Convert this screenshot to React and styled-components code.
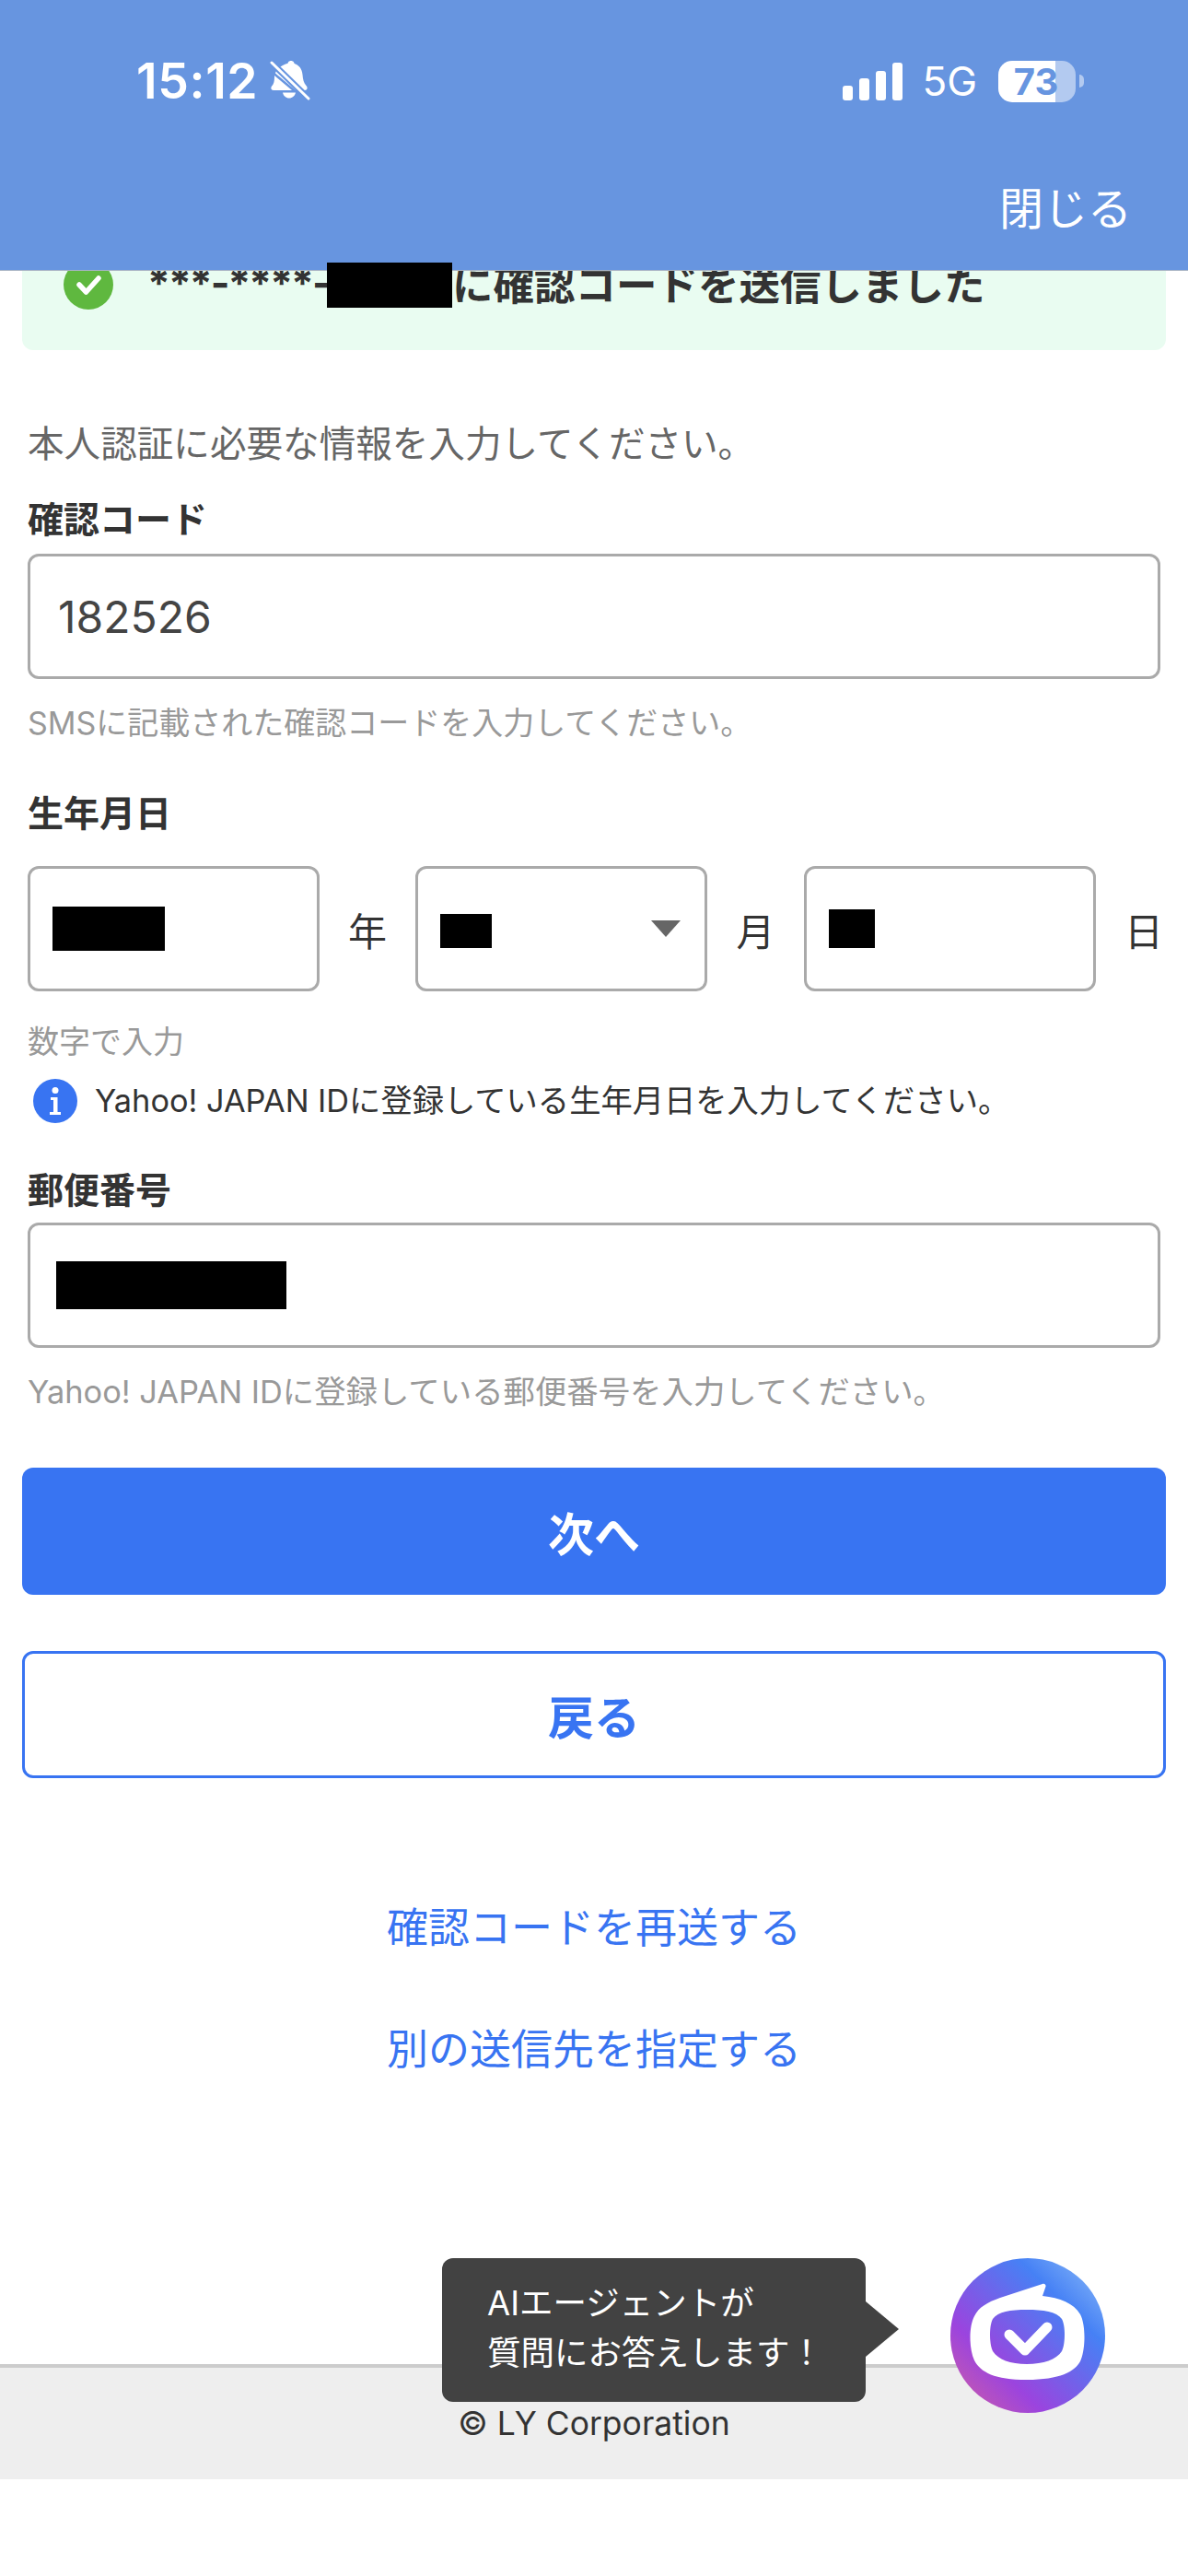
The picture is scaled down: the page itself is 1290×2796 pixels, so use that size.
import React from 'react'
import styled, { createGlobalStyle } from 'styled-components'

const GlobalStyle = createGlobalStyle`
  html, body {
    margin: 0;
    padding: 0;
    background: #fff;
  }
  body {
    font-family: "Inter", "Noto Sans CJK JP", sans-serif;
    color: #333;
  }
`

const Page = styled.div`
  position: relative;
  width: 1290px;
  height: 2796px;
  overflow: hidden;
`

const Header = styled.header`
  position: absolute;
  top: 0;
  left: 0;
  right: 0;
  height: 293px;
  z-index: 1;
  background: #6795e0;
  box-shadow: 0 1px 0 #a9b4c4;
  color: #fff;
  box-sizing: border-box;
  padding: 63px 61px 0 148px;
  display: flex;
  flex-direction: column;
`

const StatusBar = styled.div`
  display: flex;
  align-items: center;
  justify-content: space-between;
  height: 50px;
  padding-right: 52px;
`

const StatusGroup = styled.div`
  display: flex;
  align-items: center;
  gap: ${p => p.$gap}px;
`

const Time = styled.span`
  font-size: 53.5px;
  font-weight: 600;
  line-height: 50px;
  letter-spacing: 0.6px;
`

const Network = styled.span`
  font-size: 44px;
  font-weight: 400;
  line-height: 50px;
  margin-right: 3px;
`

const Battery = styled.div`
  width: 84px;
  height: 45px;
  border-radius: 15px;
  background: linear-gradient(to right, #fff 74%, #b3caf0 74%);
  color: #6795e0;
  font-size: 40px;
  font-weight: 700;
  line-height: 45px;
  text-align: center;
  padding-right: 2px;
  box-sizing: border-box;
`

const BatteryTip = styled.div`
  width: 5px;
  height: 14px;
  margin-left: -16px;
  border-radius: 0 7px 7px 0;
  background: #b3caf0;
`

const CloseLink = styled.a`
  align-self: flex-end;
  margin-top: 91px;
  font-size: 48px;
  line-height: 46px;
  font-weight: 400;
`

const Main = styled.main`
  padding: 238px 24px 0;
  display: flex;
  flex-direction: column;
`

const Banner = styled.div`
  height: 142px;
  border-radius: 12px;
  background: #e9fcf1;
  display: flex;
  align-items: center;
  gap: 37px;
  padding: 0 0 0 45px;
  margin-bottom: 71px;
  font-size: 44.5px;
  font-weight: 700;
`

const BannerText = styled.span`
  display: flex;
  align-items: center;
  margin-top: -5px;
`

const MaskedNumber = styled.span`
  width: 195px;
  flex: none;
  letter-spacing: -2px;
  white-space: nowrap;
`

const Redact = styled.span`
  display: block;
  position: relative;
  top: ${p => p.$shift || 0}px;
  z-index: 2;
  flex: none;
  background: #000;
  width: ${p => p.$w}px;
  height: ${p => p.$h}px;
`

const Lead = styled.p`
  margin: 0 6px 21px;
  font-size: 39.6px;
  line-height: 62px;
  color: #666;
`

const Field = styled.div`
  padding: 0 6px;
  margin-bottom: ${p => p.$mb || 0}px;
`

const Label = styled.div`
  font-size: 39px;
  font-weight: 700;
  line-height: 60px;
  margin-bottom: ${p => p.$mb}px;
`

const Input = styled.div`
  height: 136px;
  box-sizing: border-box;
  border: 3px solid #aaa;
  border-radius: 12px;
  background: #fff;
  display: flex;
  align-items: center;
  justify-content: ${p => (p.$select ? 'space-between' : 'flex-start')};
  padding: 0 ${p => (p.$select ? 26 : 24)}px 0 ${p => p.$pad || 24}px;
  font-size: 48px;
  color: #444;
  ${p => p.$narrow && 'width: 317px; flex: none;'}
`

const Hint = styled.div`
  font-size: ${p => p.$size || 34}px;
  line-height: 50px;
  color: #999;
  white-space: nowrap;
  margin-top: ${p => p.$mt || 23}px;
`

const DateRow = styled.div`
  display: flex;
  align-items: center;
`

const DateUnit = styled.span`
  flex: none;
  font-size: 42px;
  width: ${p => p.$w}px;
  text-align: ${p => (p.$last ? 'right' : 'center')};
  color: #333;
`

const Arrow = styled.span`
  width: 0;
  height: 0;
  border-left: 16px solid transparent;
  border-right: 16px solid transparent;
  border-top: 18px solid #666;
`

const Notice = styled.div`
  display: flex;
  align-items: center;
  gap: 19px;
  margin: 14px 0 0 6px;
  font-size: 34.3px;
  line-height: 50px;
  color: #333;
`

const ButtonBase = styled.div`
  height: 138px;
  box-sizing: border-box;
  border-radius: 12px;
  display: flex;
  align-items: center;
  justify-content: center;
  font-size: 50px;
  font-weight: 700;
`

const PrimaryButton = styled(ButtonBase)`
  background: #3874f2;
  color: #fff;
  margin-bottom: 61px;
`

const SecondaryButton = styled(ButtonBase)`
  background: #fff;
  border: 3px solid #3874f2;
  color: #3874f2;
  margin-bottom: 105px;
`

const TextLink = styled.a`
  display: block;
  text-align: center;
  font-size: 45px;
  line-height: 116px;
  margin-bottom: 16px;
  color: #3874f2;
`

const Footer = styled.footer`
  position: absolute;
  top: 2566px;
  left: 0;
  right: 0;
  height: 125px;
  box-sizing: border-box;
  background: #eee;
  border-top: 4px solid #ccc;
  display: flex;
  align-items: center;
  justify-content: center;
  font-size: 35.5px;
  color: #333;
`

const Tooltip = styled.div`
  position: absolute;
  left: 480px;
  top: 2451px;
  width: 460px;
  height: 156px;
  box-sizing: border-box;
  padding: 22px 0 0 49px;
  border-radius: 12px;
  background: #424242;
  color: #fff;
  font-size: 36.5px;
  line-height: 54px;
  &::after {
    content: '';
    position: absolute;
    left: 100%;
    top: 47px;
    border-left: 36px solid #424242;
    border-top: 30px solid transparent;
    border-bottom: 30px solid transparent;
  }
`

const AgentButton = styled.div`
  position: absolute;
  left: 1032px;
  top: 2451px;
  width: 168px;
  height: 168px;
  border-radius: 50%;
  background: linear-gradient(225deg, #8cbcf8 2%, #4681f5 28%, #9b44de 70%, #d45fa0 100%);
`

const BellIcon = () => (
  <svg width="44" height="46" viewBox="0 0 44 46">
    <path d="M20 2.5c1-2 5-2 6 0 .3.6.4 1 .6 1.4 5.200 1.600 8.400 6 8.900 12 .4 5 1.200 9 4 12 2 2 1.200 5-1.500 5H28L6 14.500C7.500 10 11 6.500 19.500 3.800Z M5 17l19 16H4c-2.800 0-3.500-3-1.500-5C5 25.500 5 21 5 17Z M14 35.500h14c-.8 3.500-3.500 6-7 6s-6.200-2.500-7-6Z" fill="#fff" />
    <path d="M2 3 42 42" stroke="#6795e0" strokeWidth="7" />
    <path d="M2 3 42 42" stroke="#fff" strokeWidth="3" strokeLinecap="round" />
  </svg>
)

const SignalIcon = () => (
  <svg width="66" height="41" viewBox="0 0 66 41" fill="#fff">
    <rect x="0" y="25" width="11" height="16" rx="3" />
    <rect x="18" y="17" width="11" height="24" rx="3" />
    <rect x="36" y="9" width="11" height="32" rx="3" />
    <rect x="54" y="0" width="11" height="41" rx="3" />
  </svg>
)

const CheckIcon = () => (
  <svg width="54" height="54" viewBox="0 0 54 54">
    <circle cx="27" cy="27" r="27" fill="#5fb83f" />
    <path d="M17 27l7.500 8L38 20" fill="none" stroke="#fff" strokeWidth="5.500" strokeLinecap="round" strokeLinejoin="round" />
  </svg>
)

const InfoIcon = () => (
  <svg width="48" height="48" viewBox="0 0 48 48">
    <circle cx="24" cy="24" r="24" fill="#3874f2" />
    <circle cx="24" cy="12.500" r="3.500" fill="#fff" />
    <path d="M19 20h7.500v16H30v3H18v-3h4V23h-3Z" fill="#fff" />
  </svg>
)

const AgentIcon = () => (
  <svg width="168" height="168" viewBox="0 0 168 168">
    <path
      fill="#fff"
      fillRule="evenodd"
      d="M100 28c2-.8 4 .6 3.500 2.800L100 41c19 2 34 8 41 20 6 11 6 38 0 51-6 11-22 20-58 20-35 0-50-8-57-21-6-13-6-37 0-48 5-10 14-15 28-20Z M83 56c-18 0-31 2-37 10-4 7-4 27 0 35 6 9 19 14 37 14s32-5 38-14c4-8 4-28 0-35-6-8-20-10-38-10Z"
    />
    <path d="M64 83l17 17 24-25" fill="none" stroke="#fff" strokeWidth="11" strokeLinecap="round" strokeLinejoin="round" />
  </svg>
)

function App() {
  return (
    <Page>
      <GlobalStyle />
      <Header>
        <StatusBar>
          <StatusGroup $gap={13}>
            <Time>15:12</Time>
            <BellIcon />
          </StatusGroup>
          <StatusGroup $gap={20}>
            <SignalIcon />
            <Network>5G</Network>
            <Battery>73</Battery>
            <BatteryTip />
          </StatusGroup>
        </StatusBar>
        <CloseLink>閉じる</CloseLink>
      </Header>

      <Main>
        <Banner>
          <CheckIcon />
          <BannerText>
            <MaskedNumber>***-****-</MaskedNumber>
            <Redact $w={136} $h={49} $shift={3} />
            に確認コードを送信しました
          </BannerText>
        </Banner>

        <Lead>本人認証に必要な情報を入力してください。</Lead>

        <Field $mb={43}>
          <Label $mb={7}>確認コード</Label>
          <Input $pad={30}>182526</Input>
          <Hint>SMSに記載された確認コードを入力してください。</Hint>
        </Field>

        <Field $mb={42}>
          <Label $mb={27}>生年月日</Label>
          <DateRow>
            <Input $narrow>
              <Redact $w={122} $h={48} />
            </Input>
            <DateUnit $w={104}>年</DateUnit>
            <Input $narrow $select>
              <Redact $w={56} $h={37} $shift={2} />
              <Arrow />
            </Input>
            <DateUnit $w={105}>月</DateUnit>
            <Input $narrow>
              <Redact $w={50} $h={42} />
            </Input>
            <DateUnit $w={73} $last>日</DateUnit>
          </DateRow>
          <Hint $mt={30}>数字で入力</Hint>
          <Notice>
            <InfoIcon />
            Yahoo! JAPAN IDに登録している生年月日を入力してください。
          </Notice>
        </Field>

        <Field $mb={57}>
          <Label $mb={5}>郵便番号</Label>
          <Input $pad={28}>
            <Redact $w={250} $h={52} />
          </Input>
          <Hint $size={34.4}>Yahoo! JAPAN IDに登録している郵便番号を入力してください。</Hint>
        </Field>

        <PrimaryButton>次へ</PrimaryButton>
        <SecondaryButton>戻る</SecondaryButton>

        <TextLink>確認コードを再送する</TextLink>
        <TextLink>別の送信先を指定する</TextLink>
      </Main>

      <Footer>© LY Corporation</Footer>
      <Tooltip>
        AIエージェントが
        <br />
        質問にお答えします！
      </Tooltip>
      <AgentButton>
        <AgentIcon />
      </AgentButton>
    </Page>
  )
}

export default App
